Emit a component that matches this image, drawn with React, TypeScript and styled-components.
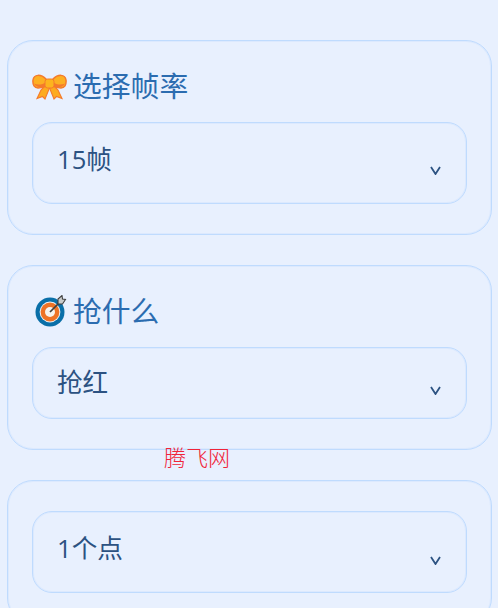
import styled, { createGlobalStyle } from "styled-components";

const GlobalStyle = createGlobalStyle`
  html, body {
    margin: 0;
    height: 100%;
    overflow: hidden;
    background: #e8f0fe;
  }
  body {
    font-family: "Open Sans", "Noto Sans CJK SC", sans-serif;
  }
`;

const Page = styled.div`
  position: relative;
  display: flex;
  flex-direction: column;
  gap: 30px;
  width: 498px;
  height: 608px;
  padding: 40px 6px 0 7px;
  box-sizing: border-box;
  overflow: hidden;
`;

const Card = styled.section`
  flex: none;
  padding: 30px 24px;
  border: 1px solid #bfdbfe;
  border-radius: 26px;
  box-shadow: inset 0 0 0 1px rgba(191, 219, 254, 0.3);
`;

const Title = styled.h2`
  display: flex;
  align-items: center;
  gap: 6px;
  height: 30px;
  margin: 0 0 21px;
  color: #2b6cb0;
  font-size: 28.8px;
  font-weight: 400;
  line-height: 30px;
`;

const IconSlot = styled.span`
  display: flex;
  flex: none;
  justify-content: center;
  width: 35px;
`;

const Select = styled.div<{ $height: number }>`
  display: flex;
  justify-content: space-between;
  align-items: center;
  height: ${(p) => p.$height}px;
  padding: 0 25px 0 24px;
  border: 1px solid #bfdbfe;
  border-radius: 20px;
  box-sizing: border-box;
  box-shadow: inset 0 0 0 1px rgba(191, 219, 254, 0.3);
`;

const Value = styled.span<{ $raise: number }>`
  margin-bottom: ${(p) => p.$raise}px;
  color: #2c5282;
  font-size: 25.6px;
  line-height: 36px;
`;

const Chevron = styled.svg<{ $drop: number }>`
  flex: none;
  width: 11px;
  height: 9px;
  margin-top: ${(p) => p.$drop}px;
  fill: none;
  stroke: #2c5282;
  stroke-width: 1.8;
`;

const Watermark = styled.div`
  position: absolute;
  top: 443px;
  left: 164px;
  color: #f02438;
  font-family: "Noto Sans CJK SC", sans-serif;
  font-size: 22px;
  font-weight: 300;
  line-height: 26px;
  white-space: nowrap;
`;

const BowIcon = () => (
  <svg width="35" height="27" viewBox="0 0 35 27" aria-hidden="true">
    <path d="M14 12 L9 17 L5 25.5 L10.5 23.5 L13 26 L17.5 15Z" fill="#fdab1f" stroke="#f47a2c" strokeWidth="1.1" />
    <path d="M21 12 L26 17 L30 25.5 L24.5 23.5 L22 26 L17.5 15Z" fill="#fdab1f" stroke="#f47a2c" strokeWidth="1.1" />
    <path d="M14 6 C9 1 2 1 1 7 C0.5 12 2.5 15 6 15 C9.5 15 12.5 14 14 13Z" fill="#fdb022" stroke="#f47a2c" strokeWidth="1.5" />
    <path d="M21 6 C26 1 33 1 34 7 C34.5 12 32.5 15 29 15 C25.5 15 22.5 14 21 13Z" fill="#fdb022" stroke="#f47a2c" strokeWidth="1.5" />
    <path d="M2 10.5 C6 12.5 10.5 11.5 14 9.5 L14 13 C10.5 15 4.5 15 2 10.5Z" fill="#f47a2c" />
    <path d="M33 10.5 C29 12.5 24.5 11.5 21 9.5 L21 13 C24.5 15 30.5 15 33 10.5Z" fill="#f47a2c" />
    <rect x="13" y="6" width="9" height="9" rx="2.5" fill="#fdb41e" stroke="#f47a2c" strokeWidth="1" />
  </svg>
);

const TargetIcon = () => (
  <svg width="34" height="32" viewBox="0 0 34 32" aria-hidden="true">
    <circle cx="17" cy="17" r="14.5" fill="#0a6fa8" />
    <circle cx="17" cy="17" r="10.4" fill="#eef3f6" />
    <circle cx="17" cy="17" r="9.4" fill="#ee7326" />
    <circle cx="17" cy="17" r="5" fill="#f6f3ee" />
    <path d="M17 17 L27 7" stroke="#3f3f3f" strokeWidth="1.7" />
    <path d="M25 9 L25 4 L29 0.5 L29.5 4 L32.5 4.5 L29.5 9Z" fill="#c9cccc" stroke="#3f3f3f" strokeWidth="1.1" />
  </svg>
);

const Arrow = ({ drop }: { drop: number }) => (
  <Chevron $drop={drop} viewBox="0 0 11 9" aria-hidden="true">
    <path d="M1 1 L5.5 8 L10 1" />
  </Chevron>
);

export default function App() {
  return (
    <>
      <GlobalStyle />
      <Page>
        <Card>
          <Title>
            <IconSlot>
              <BowIcon />
            </IconSlot>
            选择帧率
          </Title>
          <Select $height={82}>
            <Value $raise={7}>15帧</Value>
            <Arrow drop={14} />
          </Select>
        </Card>
        <Card>
          <Title>
            <IconSlot>
              <TargetIcon />
            </IconSlot>
            抢什么
          </Title>
          <Select $height={72}>
            <Value $raise={1}>抢红</Value>
            <Arrow drop={14} />
          </Select>
        </Card>
        <Card>
          <Select $height={82}>
            <Value $raise={7}>1个点</Value>
            <Arrow drop={16} />
          </Select>
        </Card>
        <Watermark>腾飞网</Watermark>
      </Page>
    </>
  );
}
